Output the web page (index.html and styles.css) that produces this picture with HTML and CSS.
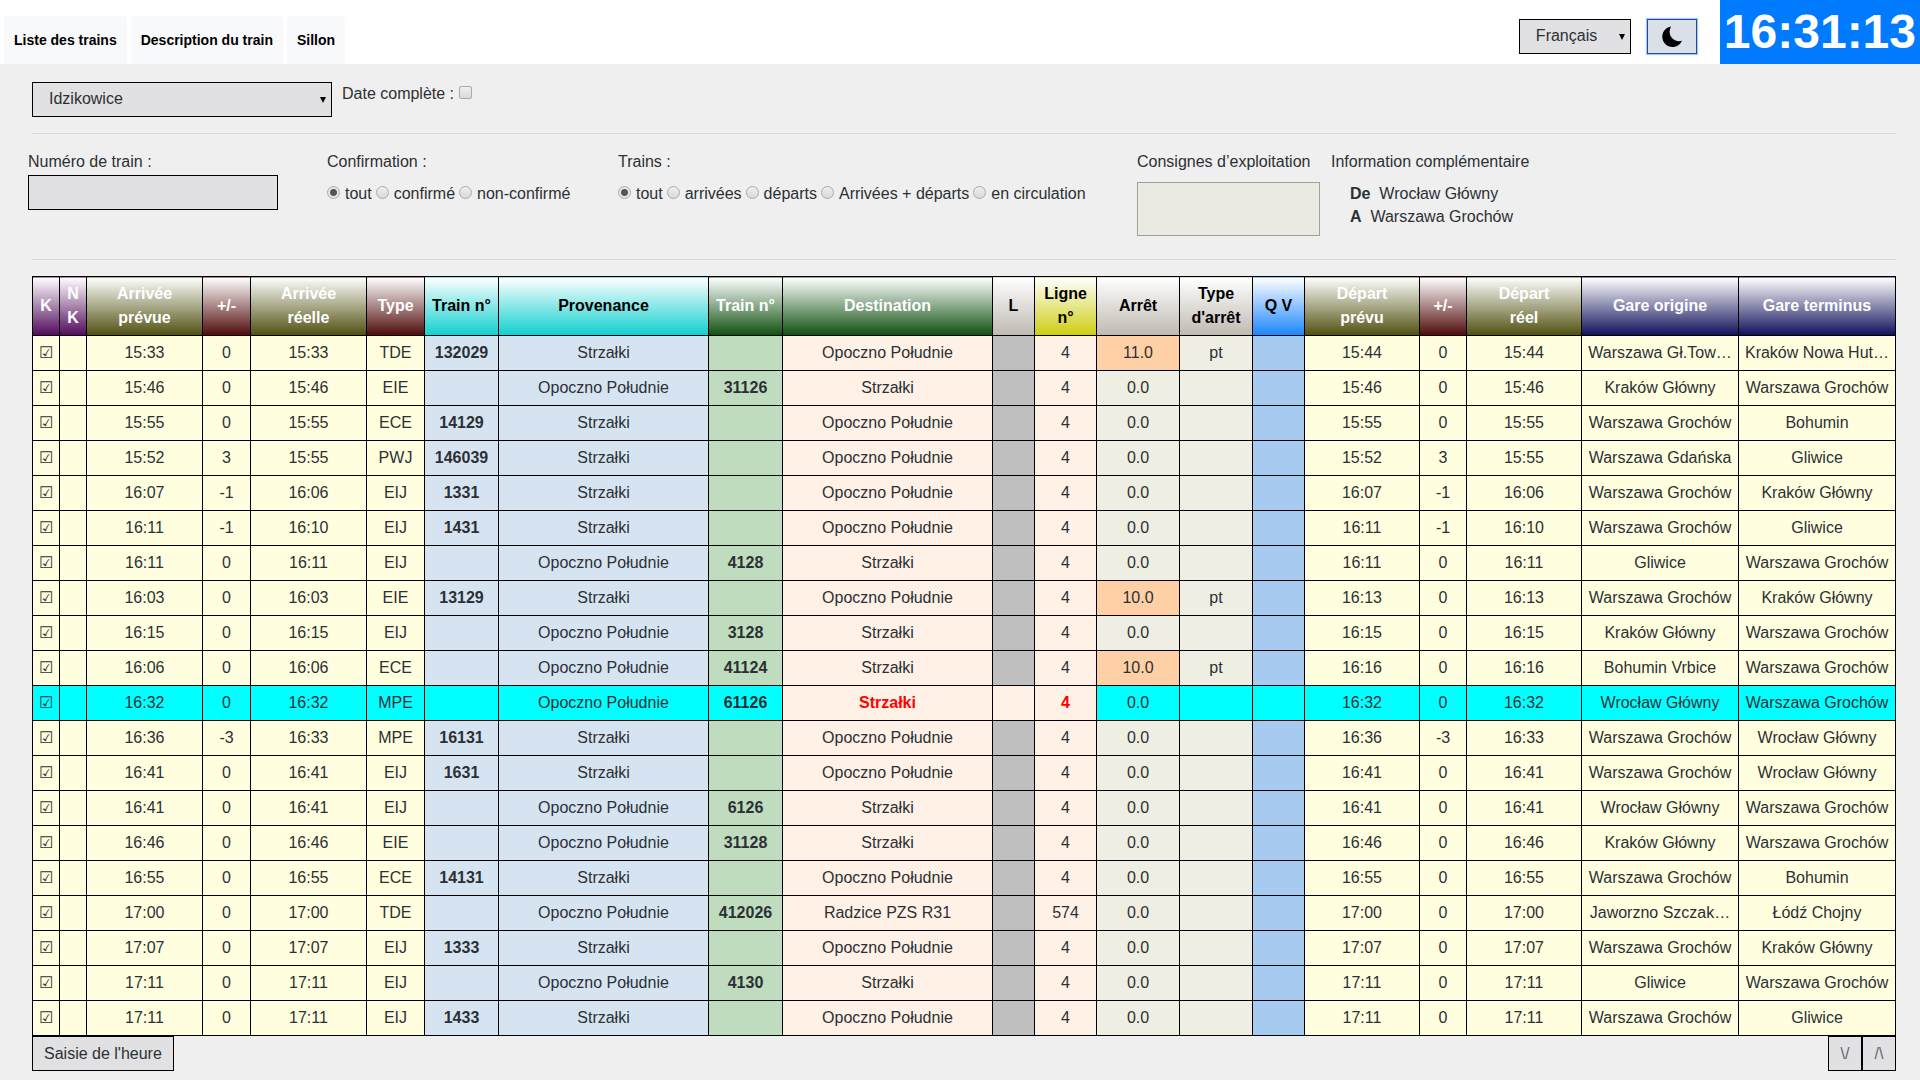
FILE: index.html
```html
<!DOCTYPE html>
<html lang="fr">
<head>
<meta charset="utf-8">
<title>Liste des trains</title>
<link rel="stylesheet" href="styles.css">
</head>
<body>
<header class="topbar">
  <nav class="tabs">
    <a class="tab" href="#liste">Liste des trains</a>
    <a class="tab" href="#description">Description du train</a>
    <a class="tab" href="#sillon">Sillon</a>
  </nav>
  <div class="tools">
    <select class="control select select-lang" aria-label="Langue"><option>Français</option></select>
    <button class="control theme" type="button" aria-label="Mode sombre">
      <svg class="moon" viewBox="0 0 20 20" aria-hidden="true"><path d="M9 0A10.300 10.300 0 1 0 20 14.300C12 16.500 4.500 9 9 0Z"/></svg>
    </button>
    <time class="clock">16:31:13</time>
  </div>
</header>
<main>
  <section class="station">
    <select class="control select select-station" aria-label="Gare"><option>Idzikowice</option></select>
    <label class="choice">Date complète : <input class="tick" type="checkbox"></label>
  </section>
  <hr class="rule">
  <section class="filters">
    <div class="filter">
      <label for="numero">Numéro de train :</label>
      <input class="control number" id="numero" type="text">
    </div>
    <div class="filter">
      <span id="confirmation">Confirmation :</span>
      <div class="choices" role="radiogroup" aria-labelledby="confirmation">
        <label class="choice"><input class="tick round" type="radio" name="conf" checked>tout</label>
        <label class="choice"><input class="tick round" type="radio" name="conf">confirmé</label>
        <label class="choice"><input class="tick round" type="radio" name="conf">non-confirmé</label>
      </div>
    </div>
    <div class="filter">
      <span id="trains">Trains :</span>
      <div class="choices" role="radiogroup" aria-labelledby="trains">
        <label class="choice"><input class="tick round" type="radio" name="trains" checked>tout</label>
        <label class="choice"><input class="tick round" type="radio" name="trains">arrivées</label>
        <label class="choice"><input class="tick round" type="radio" name="trains">départs</label>
        <label class="choice"><input class="tick round" type="radio" name="trains">Arrivées + départs</label>
        <label class="choice"><input class="tick round" type="radio" name="trains">en circulation</label>
      </div>
    </div>
    <div class="filter">
      <label for="consignes">Consignes d’exploitation</label>
      <textarea class="notes" id="consignes" readonly></textarea>
    </div>
    <div class="filter">
      <span>Information complémentaire</span>
      <div class="route">
        <div><b>De</b>&nbsp; Wrocław Główny</div>
        <div><b>A</b>&nbsp; Warszawa Grochów</div>
      </div>
    </div>
  </section>
  <hr class="rule">
  <section class="board">
    <table class="trains">
      <colgroup>
        <col class="w-flag time"><col class="w-flag time"><col class="w-arr time"><col class="w-delay time"><col class="w-arr time"><col class="w-type time">
        <col class="w-num from"><col class="w-place from"><col class="w-num to-num"><col class="w-place to">
        <col class="w-l blank"><col class="w-line to"><col class="w-stop stop"><col class="w-stoptype stop"><col class="w-qv qv">
        <col class="w-dep time"><col class="w-delay2 time"><col class="w-dep time"><col class="w-end time"><col class="w-end time">
      </colgroup>
      <thead>
        <tr>
          <th class="h-purple">K<th class="h-purple">N<br>K<th class="h-olive">Arrivée<br>prévue<th class="h-maroon">+/-<th class="h-olive">Arrivée<br>réelle<th class="h-maroon">Type
          <th class="h-cyan">Train n°<th class="h-cyan">Provenance<th class="h-green">Train n°<th class="h-green">Destination
          <th class="h-grey">L<th class="h-yellow">Ligne<br>n°<th class="h-grey">Arrêt<th class="h-grey">Type<br>d'arrêt<th class="h-blue">Q V
          <th class="h-olive">Départ<br>prévu<th class="h-maroon">+/-<th class="h-olive">Départ<br>réel<th class="h-navy">Gare origine<th class="h-navy">Gare terminus
        </tr>
      </thead>
      <tbody>
        <tr><td>☑<td><td>15:33<td>0<td>15:33<td>TDE<td>132029<td>Strzałki<td><td>Opoczno Południe<td><td>4<td class="halt">11.0<td>pt<td><td>15:44<td>0<td>15:44<td>Warszawa Gł.Tow…<td>Kraków Nowa Hut…</tr>
        <tr><td>☑<td><td>15:46<td>0<td>15:46<td>EIE<td><td>Opoczno Południe<td>31126<td>Strzałki<td><td>4<td>0.0<td><td><td>15:46<td>0<td>15:46<td>Kraków Główny<td>Warszawa Grochów</tr>
        <tr><td>☑<td><td>15:55<td>0<td>15:55<td>ECE<td>14129<td>Strzałki<td><td>Opoczno Południe<td><td>4<td>0.0<td><td><td>15:55<td>0<td>15:55<td>Warszawa Grochów<td>Bohumin</tr>
        <tr><td>☑<td><td>15:52<td>3<td>15:55<td>PWJ<td>146039<td>Strzałki<td><td>Opoczno Południe<td><td>4<td>0.0<td><td><td>15:52<td>3<td>15:55<td>Warszawa Gdańska<td>Gliwice</tr>
        <tr><td>☑<td><td>16:07<td>-1<td>16:06<td>EIJ<td>1331<td>Strzałki<td><td>Opoczno Południe<td><td>4<td>0.0<td><td><td>16:07<td>-1<td>16:06<td>Warszawa Grochów<td>Kraków Główny</tr>
        <tr><td>☑<td><td>16:11<td>-1<td>16:10<td>EIJ<td>1431<td>Strzałki<td><td>Opoczno Południe<td><td>4<td>0.0<td><td><td>16:11<td>-1<td>16:10<td>Warszawa Grochów<td>Gliwice</tr>
        <tr><td>☑<td><td>16:11<td>0<td>16:11<td>EIJ<td><td>Opoczno Południe<td>4128<td>Strzałki<td><td>4<td>0.0<td><td><td>16:11<td>0<td>16:11<td>Gliwice<td>Warszawa Grochów</tr>
        <tr><td>☑<td><td>16:03<td>0<td>16:03<td>EIE<td>13129<td>Strzałki<td><td>Opoczno Południe<td><td>4<td class="halt">10.0<td>pt<td><td>16:13<td>0<td>16:13<td>Warszawa Grochów<td>Kraków Główny</tr>
        <tr><td>☑<td><td>16:15<td>0<td>16:15<td>EIJ<td><td>Opoczno Południe<td>3128<td>Strzałki<td><td>4<td>0.0<td><td><td>16:15<td>0<td>16:15<td>Kraków Główny<td>Warszawa Grochów</tr>
        <tr><td>☑<td><td>16:06<td>0<td>16:06<td>ECE<td><td>Opoczno Południe<td>41124<td>Strzałki<td><td>4<td class="halt">10.0<td>pt<td><td>16:16<td>0<td>16:16<td>Bohumin Vrbice<td>Warszawa Grochów</tr>
        <tr class="current"><td>☑<td><td>16:32<td>0<td>16:32<td>MPE<td><td>Opoczno Południe<td>61126<td class="alert">Strzałki<td class="alert"><td class="alert">4<td>0.0<td><td><td>16:32<td>0<td>16:32<td>Wrocław Główny<td>Warszawa Grochów</tr>
        <tr><td>☑<td><td>16:36<td>-3<td>16:33<td>MPE<td>16131<td>Strzałki<td><td>Opoczno Południe<td><td>4<td>0.0<td><td><td>16:36<td>-3<td>16:33<td>Warszawa Grochów<td>Wrocław Główny</tr>
        <tr><td>☑<td><td>16:41<td>0<td>16:41<td>EIJ<td>1631<td>Strzałki<td><td>Opoczno Południe<td><td>4<td>0.0<td><td><td>16:41<td>0<td>16:41<td>Warszawa Grochów<td>Wrocław Główny</tr>
        <tr><td>☑<td><td>16:41<td>0<td>16:41<td>EIJ<td><td>Opoczno Południe<td>6126<td>Strzałki<td><td>4<td>0.0<td><td><td>16:41<td>0<td>16:41<td>Wrocław Główny<td>Warszawa Grochów</tr>
        <tr><td>☑<td><td>16:46<td>0<td>16:46<td>EIE<td><td>Opoczno Południe<td>31128<td>Strzałki<td><td>4<td>0.0<td><td><td>16:46<td>0<td>16:46<td>Kraków Główny<td>Warszawa Grochów</tr>
        <tr><td>☑<td><td>16:55<td>0<td>16:55<td>ECE<td>14131<td>Strzałki<td><td>Opoczno Południe<td><td>4<td>0.0<td><td><td>16:55<td>0<td>16:55<td>Warszawa Grochów<td>Bohumin</tr>
        <tr><td>☑<td><td>17:00<td>0<td>17:00<td>TDE<td><td>Opoczno Południe<td>412026<td>Radzice PZS R31<td><td>574<td>0.0<td><td><td>17:00<td>0<td>17:00<td>Jaworzno Szczak…<td>Łódź Chojny</tr>
        <tr><td>☑<td><td>17:07<td>0<td>17:07<td>EIJ<td>1333<td>Strzałki<td><td>Opoczno Południe<td><td>4<td>0.0<td><td><td>17:07<td>0<td>17:07<td>Warszawa Grochów<td>Kraków Główny</tr>
        <tr><td>☑<td><td>17:11<td>0<td>17:11<td>EIJ<td><td>Opoczno Południe<td>4130<td>Strzałki<td><td>4<td>0.0<td><td><td>17:11<td>0<td>17:11<td>Gliwice<td>Warszawa Grochów</tr>
        <tr><td>☑<td><td>17:11<td>0<td>17:11<td>EIJ<td>1433<td>Strzałki<td><td>Opoczno Południe<td><td>4<td>0.0<td><td><td>17:11<td>0<td>17:11<td>Warszawa Grochów<td>Gliwice</tr>
      </tbody>
    </table>
    <div class="actions">
      <button class="control action" type="button">Saisie de l'heure</button>
      <div class="pager">
        <button class="control page" type="button" aria-label="Descendre">\/</button>
        <button class="control page" type="button" aria-label="Monter">/\</button>
      </div>
    </div>
  </section>
</main>
</body>
</html>
```
FILE: styles.css
```css
* { box-sizing: border-box; }

body {
  margin: 0;
  background: #efefef;
  color: #2c3034;
  font: 16px/24px "Liberation Sans", Arial, sans-serif;
}

/* Top bar */
.topbar {
  display: flex;
  justify-content: space-between;
  align-items: flex-end;
  background: #fff;
}
.tabs { display: flex; gap: 4px; padding-left: 4px; }
.tab {
  padding: 0 10px;
  border-radius: 4px 4px 0 0;
  background: #f8f9fb;
  color: #000;
  font-size: 14px;
  font-weight: bold;
  line-height: 48px;
  text-decoration: none;
}
.tools { display: flex; align-items: center; gap: 16px; }
.clock {
  margin-left: 7px;
  padding: 0 4px;
  background: #007bff;
  color: #fff;
  font-size: 48px;
  font-weight: bold;
  line-height: 64px;
}

/* Controls */
.control {
  height: 35px;
  margin: 0;
  border: 1px solid #000;
  border-radius: 0;
  background-color: #e1e1e3;
  color: #2c3034;
  font: inherit;
}
.select {
  appearance: none;
  padding: 0 16px 1px;
  background-image: url("data:image/svg+xml,%3Csvg xmlns='http://www.w3.org/2000/svg' width='6' height='6'%3E%3Cpath d='M0 0h6L3 6z'/%3E%3C/svg%3E");
  background-repeat: no-repeat;
  background-position: right 5px center;
}
.tools .control { margin-top: 9px; }
.select-lang { width: 112px; }
.select-station { width: 300px; }
.theme {
  display: grid;
  place-items: center;
  width: 50px;
  padding: 0;
  border-color: #1f4b99;
  background-color: #dae0e8;
  box-shadow: 0 0 1px 1px #a9c8f5;
}
.moon { width: 20px; height: 21px; }

.tick {
  appearance: none;
  width: 13px;
  height: 13px;
  margin: 0;
  border: 1px solid #aaa;
  border-radius: 2px;
  background: linear-gradient(#eee, #d9d9d9);
}
.round { border-radius: 50%; }
.round:checked { background: radial-gradient(circle, #555 3px, #e6e6e6 4px); }
.choices { display: flex; gap: 4px; margin-top: 8px; }
.choice { display: flex; align-items: center; gap: 5px; white-space: nowrap; }
.choice .tick { margin-bottom: 4px; }

/* Filters */
.station {
  display: flex;
  align-items: flex-start;
  gap: 10px;
  padding: 18px 32px 16px;
}
.rule {
  height: 1px;
  margin: 0 24px 0 32px;
  border: 0;
  background: #d8d8d8;
}
.filters {
  display: grid;
  grid-template-columns: 299fr 291fr 519fr 194fr 561fr;
  padding: 16px 28px 23px;
}
.filter { display: flex; flex-direction: column; align-items: flex-start; white-space: nowrap; }
.number { width: 250px; margin-top: 1px; padding: 0 12px; }
.notes {
  width: 183px;
  height: 54px;
  margin-top: 8px;
  border: 1px solid #a0a0a0;
  background: #eaeae2;
  font: inherit;
  resize: none;
}
.route { margin-top: 8px; padding-left: 19px; line-height: 23px; }

/* Train table */
.board { padding: 16px 24px 9px 32px; }
.trains {
  width: 100%;
  table-layout: fixed;
  border-collapse: collapse;
  text-align: center;
  white-space: nowrap;
}
.trains th,
.trains td { height: 35px; padding: 5px 0; border: 1px solid #000; }
.trains th { color: #fff; }

.w-flag { width: 27px; }
.w-arr { width: 116px; }
.w-delay { width: 48px; }
.w-delay2 { width: 47px; }
.w-type { width: 58px; }
.w-num { width: 74px; }
.w-place { width: 210px; }
.w-l { width: 42px; }
.w-line { width: 62px; }
.w-stop { width: 83px; }
.w-stoptype { width: 73px; }
.w-qv { width: 52px; }
.w-dep { width: 115px; }
.w-end { width: 157px; }

.time { background: #ffffe0; }
.from { background: #d6e4f2; }
.to-num { background: #bfdcbf; }
.to { background: #fff1e6; }
.blank { background: #bfbfbf; }
.stop { background: #efeee2; }
.qv { background: #a6caf0; }

.h-purple { background: linear-gradient(#fff, #500a5a); }
.h-olive { background: linear-gradient(#fff, #505010); }
.h-maroon { background: linear-gradient(#fff, #500a0a); }
.h-green { background: linear-gradient(#fff, #0f5010); }
.h-navy { background: linear-gradient(#fff, #10105a); }
.h-cyan { background: linear-gradient(#fff, #10cfcf); }
.h-grey { background: linear-gradient(#fff, #bfb9b0); }
.h-yellow { background: linear-gradient(#fff, #cdcd10); }
.h-blue { background: linear-gradient(#fff, #1a85ff); }
.trains .h-cyan,
.trains .h-grey,
.trains .h-yellow,
.trains .h-blue { color: #000; }

.trains td:nth-child(7),
.trains td:nth-child(9) { font-weight: bold; }
.halt { background: #ffd0a6; }
.current { background: #0ff; }
.alert { background: #fff1e6; color: #f00; font-weight: bold; }

.actions { display: flex; justify-content: space-between; }
.action { padding: 0 11px; }
.pager { display: flex; }
.page { width: 34px; padding: 0; color: #666; }
```
